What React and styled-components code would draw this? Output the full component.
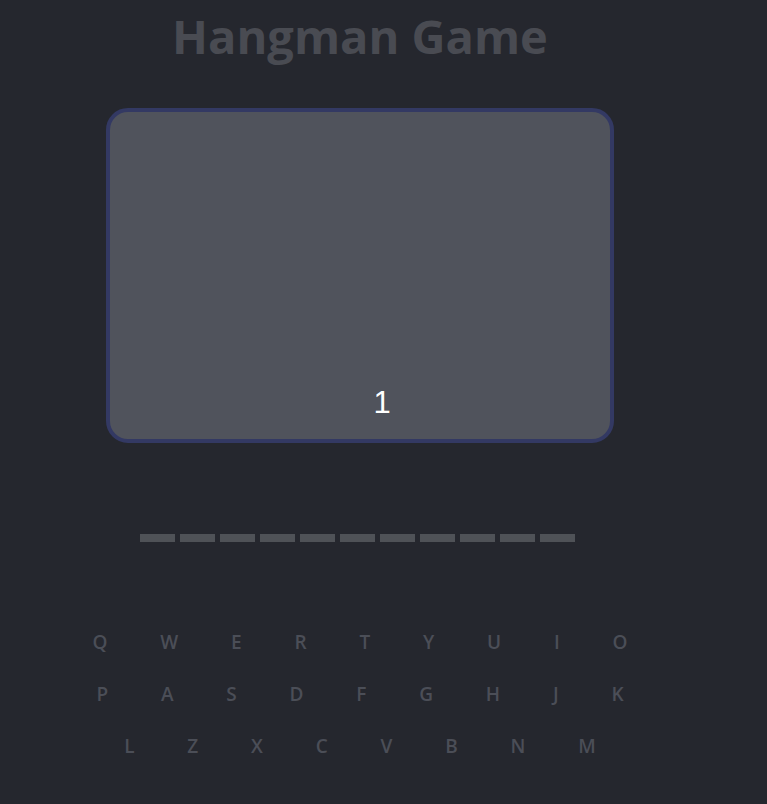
import React from "react";
import styled, { createGlobalStyle } from "styled-components";

const Global = createGlobalStyle`
  html, body {
    margin: 0;
    padding: 0;
    background: #25272e;
  }
  body {
    font-family: "Open Sans", "Noto Sans", sans-serif;
    min-height: 804px;
  }
`;

const Page = styled.main`
  width: 720px;
  display: flex;
  flex-direction: column;
  align-items: center;
`;

const Title = styled.h1`
  margin: 6px 0 0;
  font-family: "Open Sans", "Noto Sans", sans-serif;
  font-weight: 700;
  font-size: 47px;
  line-height: 60px;
  color: #494b52;
`;

const Board = styled.section`
  margin-top: 42px;
  box-sizing: border-box;
  width: 508px;
  height: 335px;
  border: 4px solid #333963;
  border-radius: 22px;
  background: #50535c;
  display: flex;
  flex-direction: column;
  justify-content: flex-end;
  align-items: center;
  padding: 0 0 19px 44px;
`;

const Count = styled.span`
  font-family: "Liberation Sans", Arial, sans-serif;
  font-size: 31px;
  line-height: 34px;
  color: #ffffff;
`;

const Word = styled.div`
  margin-top: 91px;
  margin-right: 6px;
  display: flex;
  gap: 5px;
`;

const Slot = styled.span`
  width: 35px;
  height: 8px;
  background: #4f5257;
`;

const Keyboard = styled.div`
  margin-top: 81px;
  width: 610px;
  display: flex;
  flex-wrap: wrap;
  justify-content: center;
  column-gap: 12.8px;
  row-gap: 14px;
`;

const Key = styled.button`
  height: 38px;
  padding: 0 20px;
  border: none;
  background: transparent;
  font-family: "Open Sans", "Noto Sans", sans-serif;
  font-weight: 600;
  font-size: 19px;
  color: #4b4e57;
  cursor: pointer;
`;

const letters = "QWERTYUIOPASDFGHJKLZXCVBNM".split("");

export default function App() {
  return (
    <>
      <Global />
      <Page>
        <Title>Hangman Game</Title>
        <Board>
          <Count>1</Count>
        </Board>
        <Word>
          {Array.from({ length: 11 }).map((_, i) => (
            <Slot key={i} />
          ))}
        </Word>
        <Keyboard>
          {letters.map((l) => (
            <Key key={l}>{l}</Key>
          ))}
        </Keyboard>
      </Page>
    </>
  );
}
